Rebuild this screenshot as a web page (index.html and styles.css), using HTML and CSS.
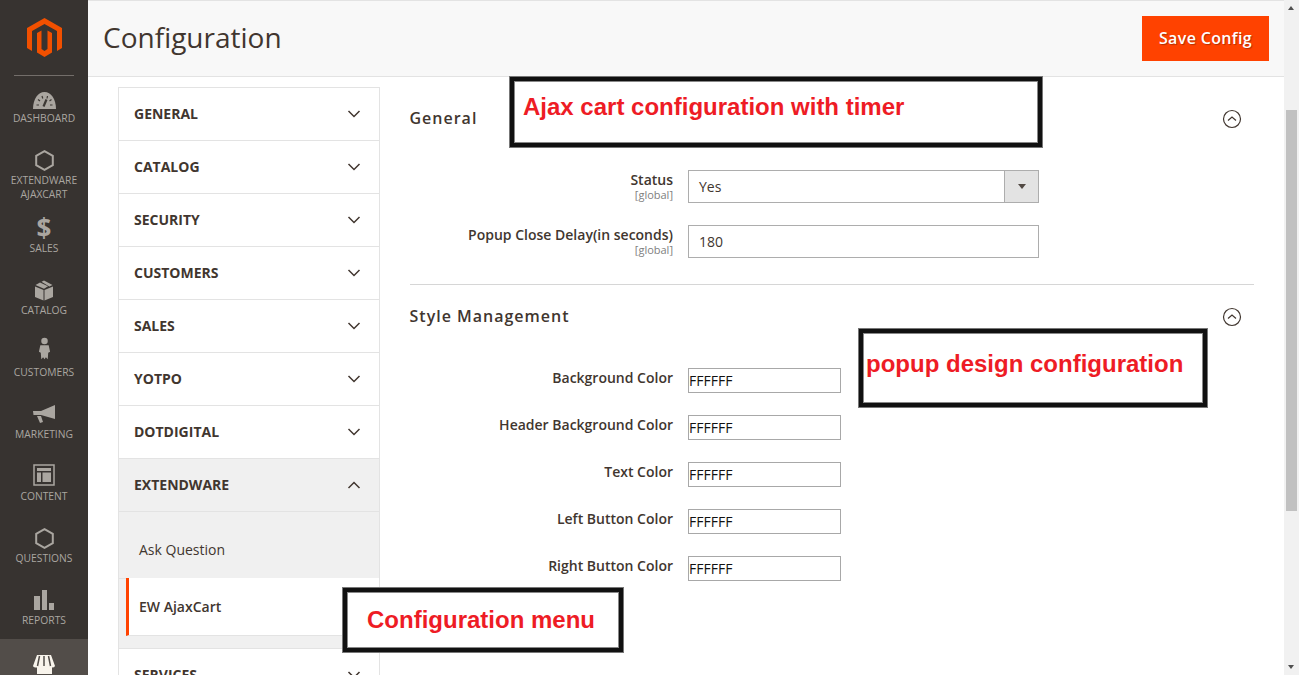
FILE: index.html
```html
<!DOCTYPE html>
<html lang="en">
<head>
<meta charset="utf-8">
<title>Configuration</title>
<link rel="stylesheet" href="styles.css">
</head>
<body>
<div class="shell">
  <aside class="sidebar">
    <div class="logo">
      <svg width="88" height="75" viewBox="0 0 88 75"><path fill="#f15000" d="M44.500 18 62 28v20l-5 3V31l-12.500-7L32 31v20l-5-3V28z"/><path fill="#f15000" d="M44.500 57 37 52.500V33l4.500-2.500V49l3 2 3-2V30.500L52 33v19.500z"/></svg>
    </div>
    <nav class="nav">
      <a class="nav-item"><span class="nav-icon nav-icon-low"><svg width="23" height="17" viewBox="0 0 23 17"><path fill="#aaa6a0" d="M0 17C0 7 5 0 11.500 0S23 7 23 17z"/><path stroke="#3d3935" stroke-width="1.200" fill="none" d="M3.500 13H6M5 7.500 7 9M9 4l.8 2.500M14.500 4 14 6.500M18.500 7.500 16.500 9M19.500 13H17"/><path stroke="#3d3935" stroke-width="2.200" d="M10.500 14.500l3-7"/></svg></span><span class="nav-label">DASHBOARD</span></a>
      <a class="nav-item nav-item-tall"><span class="nav-icon"><svg width="19" height="21" viewBox="0 0 19 21"><path fill="none" stroke="#aaa6a0" stroke-width="2" d="M9.500 1.200 17.800 5.800v9.400L9.500 19.800 1.200 15.200V5.800z"/></svg></span><span class="nav-label">EXTENDWARE AJAXCART</span></a>
      <a class="nav-item"><span class="nav-icon nav-dollar">$</span><span class="nav-label">SALES</span></a>
      <a class="nav-item"><span class="nav-icon"><svg width="20" height="21" viewBox="0 0 20 21"><path fill="#aaa6a0" d="M1 6.500 9.500 10v10.500L1 17zM19 6.500 10.500 10v10.500L19 17zM1.500 5 6 2.500l8 3.700L10 8.800zM7.500 1.700 10 .5l8.500 4.500-3.200 1.500z"/></svg></span><span class="nav-label">CATALOG</span></a>
      <a class="nav-item"><span class="nav-icon nav-icon-high"><svg width="13" height="24" viewBox="0 0 14 24"><circle cx="7" cy="3.500" r="3.500" fill="#aaa6a0"/><path fill="#aaa6a0" d="M2.500 8h9L13 15l-2 1-.5 7-2-2-1.500 2-1.500-2-2 2L3 16l-2-1z"/></svg></span><span class="nav-label">CUSTOMERS</span></a>
      <a class="nav-item"><span class="nav-icon"><svg width="22" height="18" viewBox="0 0 22 18"><path fill="#aaa6a0" d="M22 0v14L8 10H.5L0 6h8zM4 11h4l2 6-3 1z"/></svg></span><span class="nav-label">MARKETING</span></a>
      <a class="nav-item"><span class="nav-icon nav-icon-up"><svg width="22" height="22" viewBox="0 0 22 22"><path fill="none" stroke="#aaa6a0" stroke-width="1.500" d="M1 1h20v20H1z"/><path fill="#aaa6a0" d="M4 4h14v3H4zM4 8.500h4V18H4zM9.500 8.500H18V18H9.500z"/></svg></span><span class="nav-label">CONTENT</span></a>
      <a class="nav-item"><span class="nav-icon"><svg width="19" height="21" viewBox="0 0 19 21"><path fill="none" stroke="#aaa6a0" stroke-width="2" d="M9.500 1.200 17.800 5.800v9.400L9.500 19.800 1.200 15.200V5.800z"/></svg></span><span class="nav-label">QUESTIONS</span></a>
      <a class="nav-item"><span class="nav-icon"><svg width="20" height="20" viewBox="0 0 20 20"><path fill="#aaa6a0" d="M0 6h6v14H0zM8 0h5v20H8zM15 13h5v7h-5z"/></svg></span><span class="nav-label">REPORTS</span></a>
      <a class="nav-item nav-item-active"><span class="nav-icon"><svg width="22" height="20" viewBox="0 0 22 20"><path fill="#f8f4ec" d="M4 0h14l4 11q-.500 1.500-3 1.500v6.500H4v-6.500Q.500 12.500 0 11z"/><path stroke="#524d49" stroke-width="1.500" d="M6.500 1 4.500 11M11 1v10M15.500 1l2 10"/></svg></span><span class="nav-label">STORES</span></a>
    </nav>
  </aside>

  <div class="page">
    <header class="page-header">
      <h1 class="page-title">Configuration</h1>
      <button class="save-button" type="button">Save Config</button>
    </header>
    <div class="content">
      <ul class="menu">
        <li class="menu-item"><span>GENERAL</span><svg class="chev" width="14" height="8" viewBox="0 0 14 8"><path d="M1.500 1 7 6.500 12.500 1"/></svg></li>
        <li class="menu-item"><span>CATALOG</span><svg class="chev" width="14" height="8" viewBox="0 0 14 8"><path d="M1.500 1 7 6.500 12.500 1"/></svg></li>
        <li class="menu-item"><span>SECURITY</span><svg class="chev" width="14" height="8" viewBox="0 0 14 8"><path d="M1.500 1 7 6.500 12.500 1"/></svg></li>
        <li class="menu-item"><span>CUSTOMERS</span><svg class="chev" width="14" height="8" viewBox="0 0 14 8"><path d="M1.500 1 7 6.500 12.500 1"/></svg></li>
        <li class="menu-item"><span>SALES</span><svg class="chev" width="14" height="8" viewBox="0 0 14 8"><path d="M1.500 1 7 6.500 12.500 1"/></svg></li>
        <li class="menu-item"><span>YOTPO</span><svg class="chev" width="14" height="8" viewBox="0 0 14 8"><path d="M1.500 1 7 6.500 12.500 1"/></svg></li>
        <li class="menu-item"><span>DOTDIGITAL</span><svg class="chev" width="14" height="8" viewBox="0 0 14 8"><path d="M1.500 1 7 6.500 12.500 1"/></svg></li>
        <li class="menu-item menu-item-open"><span>EXTENDWARE</span><svg class="chev" width="14" height="8" viewBox="0 0 14 8"><path d="M1.500 7 7 1.500 12.500 7"/></svg></li>
        <li class="submenu">
          <a class="sub-link">Ask Question</a>
          <a class="sub-link sub-link-active">EW AjaxCart</a>
        </li>
        <li class="menu-item"><span>SERVICES</span><svg class="chev" width="14" height="8" viewBox="0 0 14 8"><path d="M1.500 1 7 6.500 12.500 1"/></svg></li>
      </ul>

      <main class="form">
        <section class="section">
          <div class="section-head"><h2>General</h2><svg class="collapse" width="20" height="20" viewBox="0 0 20 20"><circle cx="10" cy="10" r="8.500"/><path d="M6 11.500l4-3.500 4 3.500"/></svg></div>
          <div class="row">
            <div class="label">Status<small>[global]</small></div>
            <div class="select"><span class="select-value">Yes</span><span class="select-arrow"><i></i></span></div>
          </div>
          <div class="row">
            <div class="label">Popup Close Delay(in seconds)<small>[global]</small></div>
            <input class="text-input" type="text" value="180">
          </div>
        </section>
        <section class="section section-style">
          <div class="section-head"><h2>Style Management</h2><svg class="collapse" width="20" height="20" viewBox="0 0 20 20"><circle cx="10" cy="10" r="8.500"/><path d="M6 11.500l4-3.500 4 3.500"/></svg></div>
          <div class="row row-color"><div class="label">Background Color</div><input class="color-input" type="text" value="FFFFFF"></div>
          <div class="row row-color"><div class="label">Header Background Color</div><input class="color-input" type="text" value="FFFFFF"></div>
          <div class="row row-color"><div class="label">Text Color</div><input class="color-input" type="text" value="FFFFFF"></div>
          <div class="row row-color"><div class="label">Left Button Color</div><input class="color-input" type="text" value="FFFFFF"></div>
          <div class="row row-color"><div class="label">Right Button Color</div><input class="color-input" type="text" value="FFFFFF"></div>
        </section>
      </main>
    </div>
  </div>

  <div class="scrollbar">
    <span class="scroll-up"></span>
    <span class="scroll-thumb"></span>
    <span class="scroll-down"></span>
  </div>
</div>

<div class="note note-ajax">Ajax cart configuration with timer</div>
<div class="note note-popup">popup design configuration</div>
<div class="note note-menu">Configuration menu</div>
</body>
</html>
```

FILE: styles.css
```css
* { box-sizing: border-box; }
html, body { margin: 0; height: 100%; overflow: hidden; }
body { font-family: "Open Sans", sans-serif; color: #41362f; background: #fff; }
.shell { display: flex; height: 675px; overflow: hidden; }

/* Sidebar */
.sidebar { width: 88px; flex: none; background: #373330; overflow: hidden; }
.logo { height: 76px; }
.logo svg { display: block; }
.logo::after { content: ""; display: block; margin: 0 14px; height: 1px; background: #736e6a; }
.nav { padding-top: 10px; }
.nav-item { display: block; height: 62px; text-align: center; color: #aaa6a0; }
.nav-item-tall { height: 68px; }
.nav-item-active { background: #524d49; margin-top: -11px; padding-top: 14px; color: #fff; }
.nav-icon { height: 24px; display: flex; align-items: center; justify-content: center; }
.nav-icon-low { padding-top: 4px; }
.nav-icon-high { padding-bottom: 6px; }
.nav-icon-up { padding-bottom: 2px; }
.nav-dollar { font-size: 26px; font-weight: 700; line-height: 24px; }
.nav-label { display: block; margin-top: 1px; font-size: 10.300px; line-height: 14px; }

/* Page */
.page { flex: 1; min-width: 0; }
.page-header { height: 77px; background: #f8f8f8; border-top: 1px solid #e3e3e3; border-bottom: 1px solid #e3e3e3; display: flex; align-items: center; justify-content: space-between; padding: 0 15px; }
.page-title { margin: -4px 0 0; font-size: 28px; font-weight: 400; color: #41362f; line-height: 1; }
.save-button { width: 127px; height: 45px; border: 0; background: #ff4200; color: #fff; font: 600 16px "Open Sans", sans-serif; letter-spacing: .35px; text-shadow: 1px 1px 1px rgba(0,0,0,.3); padding: 0 0 2px; }
.content { display: flex; gap: 30px; padding: 10px 30px 0; }

/* Left menu */
.menu { list-style: none; margin: 0; padding: 0; width: 262px; flex: none; border: 1px solid #e3e3e3; border-bottom: 0; height: 700px; }
.menu-item { height: 53px; display: flex; align-items: center; justify-content: space-between; padding: 0 18px 0 15px; font-size: 14px; font-weight: 700; border-bottom: 1px solid #e3e3e3; background: #fff; color: #41362f; }
.menu-item span { margin-top: -2px; }
.menu-item-open { background: #f0f0f0; }
.chev { fill: none; stroke: #41362f; stroke-width: 1.500; }
.submenu { background: #f0f0f0; padding-bottom: 12px; border-bottom: 1px solid #e3e3e3; }
.sub-link { display: flex; align-items: center; padding-left: 20px; font-size: 14px; }
.sub-link:first-child { height: 67px; padding-top: 8px; border-bottom: 1px solid #e3e3e3; }
.sub-link-active { height: 58px; margin: -1px 0 0 7px; padding-left: 10px; background: #fff; border-left: 3px solid #ff4200; border-bottom: 1px solid #e3e3e3; font-weight: 600; }

/* Form */
.form { width: 844px; flex: none; }
.section-head { height: 62px; display: flex; align-items: center; justify-content: space-between; padding-right: 12px; }
.section-head h2 { margin: 0 0 0 -.5px; font-size: 16px; font-weight: 600; letter-spacing: 1px; color: #41362f; }
.collapse { fill: none; stroke: #41362f; stroke-width: 1.200; margin-top: 2px; }
.section { padding-bottom: 26px; border-bottom: 1px solid #d6d6d6; }
.section-head + .row { margin-top: 21px; }
.section-style { border-bottom: 0; }
.row { display: flex; gap: 15px; margin-bottom: 22px; }
.row:last-child { margin-bottom: 0; }
.label { width: 263px; text-align: right; font-size: 14px; font-weight: 600; line-height: 20px; color: #41362f; }
.label small { display: block; font-size: 11px; font-weight: 400; line-height: 11px; color: #808080; margin-top: -1px; }
.select { width: 351px; height: 33px; border: 1px solid #adadad; display: flex; align-items: center; font-size: 14px; }
.select-value { flex: 1; padding-left: 10px; }
.select-arrow { width: 34px; height: 100%; background: #e3e3e3; border-left: 1px solid #adadad; display: flex; align-items: center; justify-content: center; }
.select-arrow i { width: 0; height: 0; border-left: 4px solid transparent; border-right: 4px solid transparent; border-top: 5px solid #514943; }
.text-input { width: 351px; height: 33px; border: 1px solid #adadad; padding: 0 10px; font: 14px "Open Sans", sans-serif; color: #41362f; background: #fff; outline: 0; }
.color-input { width: 153px; height: 25px; border: 1px solid #a8a8a8; padding: 0 1px 0 0; font: 14px "Open Sans", sans-serif; color: #111; background: #fff; outline: 0; }

/* Scrollbar */
.scrollbar { width: 15px; flex: none; background: #f1f1f1; position: relative; }
.scroll-up, .scroll-down { position: absolute; left: 4px; width: 0; height: 0; border-left: 3.500px solid transparent; border-right: 3.500px solid transparent; }
.scroll-up { top: 6px; border-bottom: 4px solid #505050; }
.scroll-down { bottom: 6px; border-top: 4px solid #505050; }
.scroll-thumb { position: absolute; left: 2px; right: 2px; top: 110px; height: 401px; background: #c1c1c1; }

/* Annotations over the screenshot */
.note { position: absolute; background: #fff; border: 5px solid #111; outline: 1px solid #777; outline-offset: -1px; box-shadow: inset 0 0 0 1px #888; font: 700 24px "Liberation Sans", sans-serif; color: #ee1c25; white-space: nowrap; }
.note-ajax { left: 509px; top: 76px; width: 534px; height: 72px; padding: 12px 0 0 9px; }
.note-popup { left: 858px; top: 328px; width: 350px; height: 80px; padding: 17px 0 0 3px; }
.note-menu { left: 342px; top: 587px; width: 282px; height: 66px; padding: 14px 0 0 20px; }
```
